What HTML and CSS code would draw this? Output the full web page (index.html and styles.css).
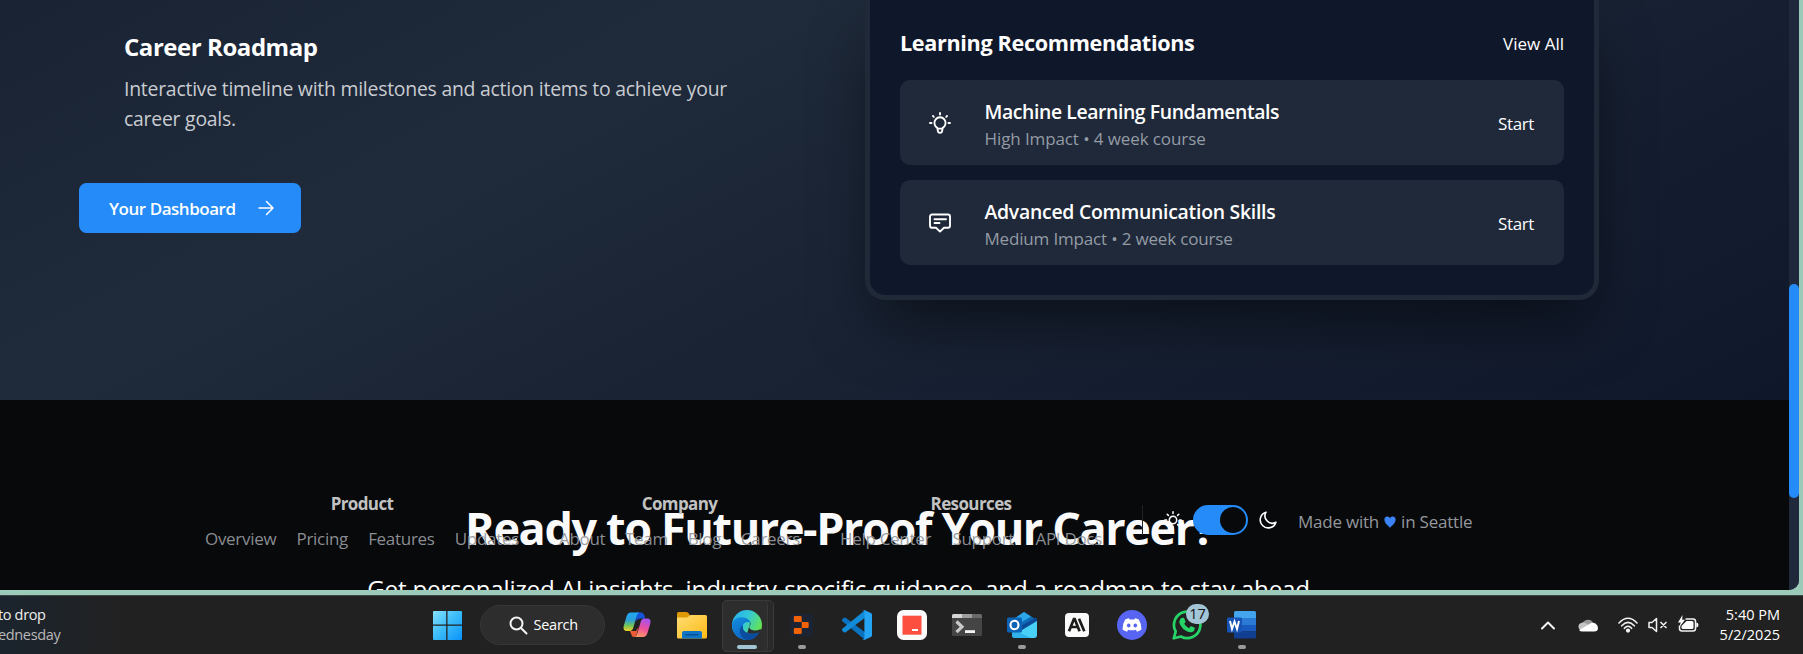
FILE: index.html
```html
<!DOCTYPE html>
<html lang="en">
<head>
<meta charset="utf-8">
<title>Career Dashboard</title>
<link rel="stylesheet" href="styles.css">
</head>
<body>
<div class="browser">
  <div class="page">
    <main class="content">
      <section class="showcase">
        <div class="intro">
          <div class="feature">
            <h3 class="feature-title">Career Roadmap</h3>
            <p class="feature-text">Interactive timeline with milestones and action items to achieve your<br>career goals.</p>
          </div>
          <a class="button">
            <span>Your Dashboard</span>
            <svg width="16" height="18" viewBox="0 0 16 18" fill="none" stroke="#fff" stroke-width="1.5" stroke-linecap="round" stroke-linejoin="round"><path d="M1 9h13.500M8.500 2.500 15 9l-6.500 6.500"/></svg>
          </a>
        </div>
        <div class="card">
          <div class="card-head">
            <h3 class="card-title">Learning Recommendations</h3>
            <a class="view-all">View All</a>
          </div>
          <div class="list">
            <div class="item">
              <svg class="item-icon" viewBox="0 0 22 22" fill="none" stroke="#fff" stroke-width="1.9" stroke-linecap="round" stroke-linejoin="round"><path d="M11 1v1.500M4 4l.8.800M18 4l-.8.800M1 11h1.500M19.500 11H21M8.300 15.800A5.600 5.600 0 1 1 13.700 15.800L13 19.700Q12.800 20.800 11 20.800T9 19.700zM8.600 16.600h4.800"/></svg>
              <div class="item-body">
                <h4 class="item-title ml">Machine Learning Fundamentals</h4>
                <p class="item-meta high">High Impact • 4 week course</p>
              </div>
              <a class="start">Start</a>
            </div>
            <div class="item">
              <svg class="item-icon" viewBox="0 0 22 22" fill="none" stroke="#fff" stroke-width="1.9" stroke-linecap="round" stroke-linejoin="round"><path d="M3 2.500h16a2 2 0 0 1 2 2v9.300a2 2 0 0 1-2 2h-4L11 19.600l-4-3.800H3a2 2 0 0 1-2-2V4.500a2 2 0 0 1 2-2zM5.500 7.200h11.500M5.500 11h5"/></svg>
              <div class="item-body">
                <h4 class="item-title">Advanced Communication Skills</h4>
                <p class="item-meta">Medium Impact • 2 week course</p>
              </div>
              <a class="start">Start</a>
            </div>
          </div>
        </div>
      </section>
      <section class="cta">
        <h2 class="cta-title">Ready to Future-Proof Your Career?</h2>
        <p class="cta-text">Get personalized AI insights, industry-specific guidance, and a roadmap to stay ahead</p>
      </section>
      <footer class="footer">
        <div class="group product">
          <h5 class="group-title">Product</h5>
          <nav class="links"><a>Overview</a><a>Pricing</a><a>Features</a><a>Updates</a></nav>
        </div>
        <div class="group company">
          <h5 class="group-title">Company</h5>
          <nav class="links"><a>About</a><a>Team</a><a>Blog</a><a>Careers</a></nav>
        </div>
        <div class="group resources">
          <h5 class="group-title">Resources</h5>
          <nav class="links"><a>Help Center</a><a>Support</a><a>API Docs</a></nav>
        </div>
        <div class="theme">
          <svg width="18" height="18" viewBox="0 0 18 18" fill="none" stroke="#fff" stroke-width="1.500" stroke-linecap="round"><circle cx="9" cy="9" r="3.700" fill="#08090b"/><path d="M9 .8v1.700M9 15.500v1.700M.8 9h1.700M15.500 9h1.700M3.200 3.200l1.200 1.200M13.600 13.600l1.200 1.200M3.200 14.800l1.200-1.200M13.600 4.400l1.200-1.200"/></svg>
          <span class="toggle"><span class="knob"></span></span>
          <svg width="18" height="18" viewBox="0 0 18 18" fill="none" stroke="#fff" stroke-width="1.600" stroke-linejoin="round"><path d="M7 1.200A8 8 0 1 0 16.900 11.200A7.300 7.300 0 0 1 7 1.200z"/></svg>
        </div>
        <div class="made">
          <span>Made with</span>
          <svg width="12" height="12" viewBox="0 0 12 12"><path fill="#3b82f6" d="M6 11.700C3.500 9.500.4 6.800.4 3.600.4 1.700 1.600.5 3.200.5 4.500.5 5.500 1.200 6 2.200 6.500 1.200 7.500.5 8.800.5c1.600 0 2.800 1.200 2.800 3.100 0 3.200-3.100 5.900-5.600 8.100z"/></svg>
          <span>in Seattle</span>
        </div>
      </footer>
    </main>
    <div class="scrollbar"><div class="thumb"></div></div>
  </div>
</div>
<div class="taskbar">
  <div class="widget"><span class="widget-top">to drop</span><span class="widget-sub">ednesday</span></div>
  <div class="apps">
    <svg class="winlogo" width="30" height="30" viewBox="0 0 30 30"><defs><linearGradient id="w" x1="0" y1="0" x2="30" y2="30" gradientUnits="userSpaceOnUse"><stop offset="0" stop-color="#8be3ff"/><stop offset=".5" stop-color="#3cbcf8"/><stop offset="1" stop-color="#0a93fa"/></linearGradient></defs><path fill="url(#w)" d="M2 1h12.200v13.500H1V2a1 1 0 0 1 1-1zM15.500 1H29a1 1 0 0 1 1 1v12.500H15.500zM1 15.800h13.200V30H2a1 1 0 0 1-1-1zM15.500 15.800H30V29a1 1 0 0 1-1 1H15.500z"/></svg>
    <div class="search">
      <svg width="19" height="19" viewBox="0 0 19 19" fill="none" stroke="#f4f4f4" stroke-width="2" stroke-linecap="round"><circle cx="7.500" cy="7.500" r="6"/><path d="M12 12l5.500 5.500"/></svg>
      <span>Search</span>
    </div>
    <div class="app">
      <svg viewBox="0 0 30 30"><defs><linearGradient id="c1" x1="0" y1="0" x2="0" y2="1"><stop offset="0" stop-color="#1fa9f5"/><stop offset=".4" stop-color="#2c9fd9"/><stop offset=".7" stop-color="#6fc35a"/><stop offset="1" stop-color="#f6cf27"/></linearGradient><linearGradient id="c2" x1=".6" y1="0" x2=".3" y2="1"><stop offset="0" stop-color="#a652f0"/><stop offset=".5" stop-color="#ec4f9c"/><stop offset="1" stop-color="#ff9a62"/></linearGradient></defs><path fill="#1454d8" d="M14 2.500h5q2.500 0 3.200 2.500l1 3.500h-5q-3 0-4 3z"/><path fill="#ee5a34" d="M8 21h6l2.500-4-1.500 6q-1 4-3 4-2 0-2.700-2.500z"/><path fill="url(#c1)" d="M9 2.500h8.500q-2 .5-2.800 3.500l-3.500 12q-.9 3-3.700 3H5q-4.500 0-3.300-5L4.500 6.500Q5.700 2.500 9 2.500z"/><path fill="url(#c2)" d="M21 27h-8.500q2-.5 2.800-3.500L18.800 11.500q.9-3 3.700-3H25q4.500 0 3.300 5l-2.800 9.500q-1.200 4-4.500 4z"/></svg>
    </div>
    <div class="app">
      <svg viewBox="0 0 30 30"><defs><linearGradient id="f" x1="0" y1="0" x2="1" y2="1"><stop offset="0" stop-color="#ffdd73"/><stop offset="1" stop-color="#fdbb16"/></linearGradient></defs><path fill="#dd9a05" d="M0 3.500Q0 2 1.500 2H9q1.500 0 2.500 1.200L13.500 6v5H0z"/><path fill="url(#f)" d="M0 7.500h10L13.500 5H28.500Q30 5 30 6.500V27q0 1.500-1.500 1.500h-27Q0 28.500 0 27z"/><path fill="#0f75c4" d="M5 28.500V23q0-2 2-2h16q2 0 2 2v5.500z"/><path stroke="#07498c" stroke-width="1.200" d="M8.500 24.800h13"/></svg>
    </div>
    <div class="app active">
      <svg viewBox="0 0 30 30"><defs><linearGradient id="e1" x1="0" y1="0" x2="1" y2=".5"><stop offset="0" stop-color="#27aef0"/><stop offset=".5" stop-color="#32c8d8"/><stop offset="1" stop-color="#66e450"/></linearGradient><linearGradient id="e2" x1="0" y1="0" x2=".6" y2="1"><stop offset="0" stop-color="#148fe0"/><stop offset="1" stop-color="#0b5fc0"/></linearGradient></defs><circle cx="15" cy="15" r="15" fill="url(#e1)"/><path fill="#2b2d2f" d="M18.500 12c1 3-1.800 3.500-1 6 1 2.700 6.500 3.300 10.700 1.300L31 19.500l-6 11H13z"/><path fill="url(#e2)" d="M0 15C.5 9.500 5 7.200 9.500 7.200c5 0 9 3 9 6.300-1-2-6-2.500-7.500 1.500-2 5.500 4.500 11.500 16 7.500C24.500 27.500 20 30 15 30 6.500 30 0 23.500 0 15z"/><path fill="#0b4c9f" d="M11 15c-2 5.500 4.500 11.500 16 7.500C24 28 19 30.200 14.500 30 7 27 6 18 11 15z"/></svg>
      <i class="mark wide"></i>
    </div>
    <div class="app">
      <svg viewBox="0 0 30 30"><rect x="3.500" y="4" width="22.500" height="22.500" rx="3" fill="#1c2333"/><path fill="#f26207" d="M8 6h5.500q1.200 0 1.200 1.200V12H8q-1.200 0-1.200-1.200V7.200Q6.800 6 8 6zM14.700 12h5.800q1.200 0 1.200 1.200v3.600q0 1.200-1.200 1.200h-5.800zM6.800 19.200Q6.800 18 8 18h6.700v4.800q0 1.200-1.200 1.200H8q-1.200 0-1.200-1.200z"/></svg>
      <i class="mark"></i>
    </div>
    <div class="app">
      <svg viewBox="0 0 30 30"><path fill="#0a72be" d="M0 11q-.6-1 .3-1.800L2 7.700q.8-.6 1.700 0L24 23v6.500L22 29z"/><path fill="#128bd8" d="M0 19q-.6 1 .3 1.800L2 22.300q.8.6 1.700 0L24 7V.5L22 1z"/><path fill="#24a4f3" d="M22 0l7 3q1 .5 1 1.700v20.600q0 1.200-1 1.700l-7 3q-1 .3-1.600-.4 1.600.4 2-1.300V1.700q-.4-1.700-2-1.300Q21-.3 22 0z"/></svg>
    </div>
    <div class="app">
      <svg viewBox="0 0 30 30"><rect width="30" height="30" rx="6.500" fill="#fbfbfb"/><rect x="5.500" y="5.700" width="19" height="19" fill="#fd4f40"/><path stroke="#fff" stroke-width="2" d="M15 20h6"/></svg>
    </div>
    <div class="app">
      <svg viewBox="0 0 30 30"><rect y="4" width="30" height="22" rx="1.500" fill="#454545"/><path fill="#d5d5d5" d="M1.500 4H10v4H0V5.500Q0 4 1.500 4z"/><path fill="#9d9d9d" d="M10 4h10v4H10z"/><path fill="#6a6a6a" d="M20 4h8.500Q30 4 30 5.500V8H20z"/><path fill="none" stroke="#c9c9c9" stroke-width="3.200" d="M4.500 11.500l5.500 5.300-5.500 5.400"/><path stroke="#f4f4f4" stroke-width="2.800" d="M13 21.600h10"/></svg>
    </div>
    <div class="app">
      <svg viewBox="0 0 30 30"><path fill="#1069b6" d="M5 10L17 2l12 7.500V12L14 20H5z"/><path fill="#2ba7ea" d="M7 9l10-7 7 4.500L10 15z"/><path fill="#0a4a98" d="M12 17L29 7.500q1 .8 1 2V12L15 21z"/><path fill="#49d0f7" d="M5 18l10 2 15-9v14q0 3-3 3H8q-3 0-3-3z"/><path fill="#2fb2ea" d="M5 19l19 9H8q-3 0-3-3z"/><rect y="7.500" width="15" height="15" rx="1.500" fill="#0c62b4"/><ellipse cx="7.500" cy="15" rx="4" ry="4.300" fill="none" stroke="#fff" stroke-width="2.100"/></svg>
      <i class="mark"></i>
    </div>
    <div class="app">
      <svg viewBox="0 0 30 30"><rect x="3" y="3" width="24" height="24" rx="4" fill="#fafafa"/><path fill="none" stroke="#1d1d1b" stroke-width="2.700" d="M7 21.200L11.900 9h.8l4.900 12.200M9 17h6.800M17 8.800l5.300 12.400"/></svg>
    </div>
    <div class="app">
      <svg viewBox="0 0 30 30"><circle cx="15" cy="15" r="15" fill="#5865f2"/><path fill="#fff" d="M12 8.300l.7 1.300q2.300-.3 4.600 0L18 8.300q2 .3 3.800 1.200 2.900 4.500 2.700 10-2 1.500-4.500 2.200l-1.200-2q-3.800 1-7.600 0l-1.200 2q-2.500-.7-4.500-2.200-.2-5.500 2.700-10Q10 8.600 12 8.300z"/><ellipse cx="11.700" cy="15.500" rx="1.800" ry="2" fill="#5865f2"/><ellipse cx="18.300" cy="15.500" rx="1.800" ry="2" fill="#5865f2"/></svg>
    </div>
    <div class="app">
      <svg viewBox="0 0 30 30"><path fill="none" stroke="#25d366" stroke-width="2.700" stroke-linejoin="round" d="M1.800 28.300l1.900-6.900A13.200 13.200 0 1 1 8.900 26.500z"/><path fill="#25d366" d="M10 7.800h1.500q.5 0 .8.700l1.200 2.900q.2.500-.2 1l-1.100 1.400q1.700 3 4.800 4.400l1.400-1.700q.4-.5 1-.2l2.800 1.300q.7.300.6.800-.3 2.700-2.500 3.500-2.200.8-5.200-.5-4.800-2.200-7-6.600-1.600-3 .2-5.700.7-1.200 1.700-1.300z"/></svg>
      <span class="badge">17</span>
    </div>
    <div class="app">
      <svg viewBox="0 0 30 30"><path fill="#43a5ee" d="M8.500 1h19Q29 1 29 2.500V8H7V2.500Q7 1 8.500 1z"/><path fill="#2b7bd4" d="M7 8h22v7H7z"/><path fill="#185abd" d="M7 15h22v6.500H7z"/><path fill="#103f91" d="M7 21.500h22V27q0 1.500-1.500 1.500h-19Q7 28.500 7 27z"/><rect y="7.500" width="15" height="15" rx="1.500" fill="#1653b5"/><path fill="none" stroke="#fff" stroke-width="1.900" d="M3 11l2 8 2.500-7.500L10 19l2-8"/></svg>
      <i class="mark"></i>
    </div>
  </div>
  <div class="tray">
    <svg class="chevron" width="14" height="9" viewBox="0 0 14 9" fill="none" stroke="#f2f2f2" stroke-width="2" stroke-linecap="round" stroke-linejoin="round"><path d="M1 7.500l6-6 6 6"/></svg>
    <svg class="cloud" width="20" height="14" viewBox="0 0 20 14"><path fill="#9a9a9a" d="M4 8.500a6 6 0 0 1 11.500-3L10 10z"/><path fill="#c4c4c4" d="M1 11Q-1 5 5 4.500 8 4.500 11 7l-5 5z"/><path fill="#fff" d="M1 12l9-5q4-3.500 7.500-1.500Q20 7 20 10q0 3.500-4 3.500H4.500Q2 13.500 1 12z"/></svg>
    <svg class="wifi" width="20" height="16" viewBox="0 0 20 16" fill="none" stroke="#f2f2f2" stroke-width="1.600" stroke-linecap="round"><path d="M1 6Q10-3.400 19 6M3.700 8.800Q10 2 16.300 8.800M6.400 11.300Q10 7.300 13.600 11.300"/><circle cx="10" cy="13.600" r="1.300" fill="#f2f2f2"/></svg>
    <svg class="sound" width="20" height="16" viewBox="0 0 20 16" fill="none" stroke="#f2f2f2" stroke-width="1.500" stroke-linejoin="round"><path d="M1 5.500h3L8.500 1.500v13L4 10.500H1zM12.500 5l6 6M18.500 5l-6 6"/></svg>
    <svg class="battery" width="21" height="18" viewBox="0 0 21 18"><path fill="none" stroke="#f2f2f2" stroke-width="1.500" d="M7.500 4H15q2.500 0 2.500 2.500v7Q17.500 16 15 16H4q-2.500 0-2.500-2.500V10.500"/><path fill="#fff" d="M8.500 6H14q1.500 0 1.500 1.500v5q0 1.500-1.500 1.500H5q-1.500 0-1.500-1.500V11zM18.300 7.500q2.200.3 2.200 2.500t-2.200 2.500zM4.500 0L0 7.500h2.700L1.500 12 7 4.800H4.200z"/></svg>
    <div class="clock"><span class="time">5:40 PM</span><span>5/2/2025</span></div>
  </div>
</div>
</body>
</html>
```
FILE: styles.css
```css
* { box-sizing: border-box; }
body {
  margin: 0;
  width: 1803px;
  height: 654px;
  overflow: hidden;
  background: #212121;
  color: #fff;
  font-family: "Open Sans", "Noto Sans", sans-serif;
  font-size: 17px;
}
h2, h3, h4, h5, p { margin: 0; }
svg { display: block; flex: none; }

.browser { height: 595px; background: #9ccab9; }
.page {
  display: flex;
  width: 1799px;
  height: 590px;
  overflow: hidden;
  border-bottom-right-radius: 10px;
  background: #1f293b;
}
.content { position: relative; width: 1789px; height: 590px; overflow: hidden; background: #08090b; white-space: nowrap; }
.scrollbar { width: 10px; padding-top: 284px; background: #1f293b; }
.thumb { height: 214px; border-radius: 5px; background: #248bf8; }

.showcase {
  display: flex;
  height: 400px;
  padding-left: 79px;
  background: linear-gradient(to bottom right, #111a2b, #1f2a3a 50%, #0f172a) bottom / 100% 930px no-repeat;
}
.intro { width: 786px; padding-top: 32px; }
.feature { padding-left: 45px; }
.feature-title { font-size: 24px; line-height: 30px; letter-spacing: -.45px; }
.feature-text { margin: 12px 0 49px; color: #c9ccd1; font-size: 19.400px; line-height: 30px; letter-spacing: -.234px; }
.button {
  display: flex;
  align-items: center;
  justify-content: space-between;
  width: 222px;
  height: 50px;
  padding: 0 27px 0 30px;
  border-radius: 7.500px;
  background: #248bf8;
  font-weight: 600;
  letter-spacing: -.47px;
}
.card {
  width: 734px;
  height: 300px;
  padding: 27.500px 30px 0;
  border: 5px solid #1f2937;
  border-top: 0;
  border-radius: 0 0 20px 20px;
  background: #0f172a;
  background-clip: padding-box;
  box-shadow: 0 31px 62px -12px rgba(0, 0, 0, .5);
}
.card-head { display: flex; justify-content: space-between; height: 52.500px; line-height: 30px; }
.card-title { font-size: 21.600px; letter-spacing: -.33px; }
.view-all { padding-top: 1px; }
.list { display: grid; gap: 15px; }
.item {
  display: flex;
  align-items: center;
  height: 85px;
  padding: 0 30px 0 28.500px;
  border-radius: 10px;
  background: #1f293a;
}
.item-icon { width: 22px; height: 22px; }
.item-body { flex: 1; margin-left: 34px; padding-top: 3px; }
.item-title { font-size: 19.400px; font-weight: 600; line-height: 28px; letter-spacing: -.26px; }
.item-title.ml { letter-spacing: -.4px; }
.item-meta { margin-top: 1px; color: #949ba4; line-height: 24px; letter-spacing: -.17px; }
.item-meta.high { letter-spacing: -.1px; }
.start { padding-top: 2px; letter-spacing: -.37px; }

.cta { width: 1679px; height: 190px; padding-top: 99.500px; text-align: center; }
.cta-title { color: #fafafa; font-size: 45px; line-height: 56px; letter-spacing: -1.380px; }
.cta-text { width: 1677px; margin-top: 13px; font-size: 24.200px; line-height: 40px; letter-spacing: -.2px; }

/* The footer floats over the call to action. */
.footer {
  position: absolute;
  left: 205px;
  top: 491.500px;
  display: flex;
  height: 60px;
  letter-spacing: -.3px;
  line-height: 24px;
}
.group { margin-right: 40px; text-align: center; }
.product { width: 314px; }
.company { width: 241px; }
.resources { width: 262px; }
.group-title { color: #c1c2c2; font-size: 17px; font-weight: 700; letter-spacing: -.62px; }
.links { display: flex; justify-content: space-between; margin-top: 11px; color: rgba(148, 151, 156, .95); }
.theme {
  display: flex;
  align-items: center;
  gap: 11px;
  height: 30px;
  margin-top: 13.500px;
  padding-left: 21px;
  border-left: 1px solid #202326;
}
.toggle {
  display: flex;
  align-items: center;
  justify-content: flex-end;
  width: 55px;
  height: 30px;
  padding-right: 2px;
  border-radius: 15px;
  background: #248bf8;
}
.knob { width: 26px; height: 26px; border-radius: 50%; background: #08090b; }
.made { display: flex; align-items: center; gap: 5px; height: 24px; margin: 18px 0 0 21px; color: #94979c; letter-spacing: -.22px; }

.taskbar {
  position: relative;
  display: flex;
  justify-content: space-between;
  height: 59px;
  border-top: 1px solid #3b4642;
  background: linear-gradient(90deg, #1b242e, #212121 120px);
  font-size: 14.500px;
  line-height: 20px;
  white-space: nowrap;
}
.widget { display: flex; flex-direction: column; width: 434px; margin-left: -2px; padding-top: 8.500px; letter-spacing: -.35px; }
.widget-top { color: #f0f0f0; }
.widget-sub { color: #b9b9b9; }
.apps { display: flex; flex: 1; }
.winlogo { margin-top: 14px; }
.search {
  display: flex;
  align-items: center;
  gap: 5.500px;
  width: 125px;
  height: 40px;
  margin: 9px 4.500px 0 18px;
  padding-left: 28px;
  border: 1px solid #363636;
  border-radius: 20px;
  background: #2d2d2d;
  letter-spacing: -.24px;
}
.app { position: relative; width: 55px; padding: 14px 12.500px 0; }
.app > svg { position: relative; width: 30px; height: 30px; }
.active::before, .active::after {
  content: "";
  position: absolute;
  left: 2.500px;
  top: 4px;
  width: 50px;
  height: 50px;
  border: 1px solid #3a3a3a;
  border-radius: 5px;
  background: #292929;
}
.active::after { width: 44px; background: #2d2d2d; }
.active > svg, .active > .mark { z-index: 1; }
.mark {
  position: absolute;
  left: 23.500px;
  top: 49px;
  width: 8px;
  height: 4px;
  border-radius: 2px;
  background: #9a9a9a;
}
.mark.wide { left: 17.500px; width: 20px; background: #a3c6d6; }
.badge {
  position: absolute;
  left: 26.500px;
  top: 8px;
  width: 23px;
  height: 20px;
  border-radius: 10px;
  background: #a3c6d6;
  color: #101010;
  text-align: center;
}
.tray { display: flex; width: 262px; }
.chevron { margin-top: 25px; }
.cloud { margin: 22px 0 0 23px; }
.wifi { margin: 21px 0 0 20px; }
.sound { margin: 21px 0 0 10px; }
.battery { margin: 19px 0 0 10px; }
.clock { display: flex; flex-direction: column; flex: 1; align-items: flex-end; padding: 8.500px 23px 0 0; }
```
